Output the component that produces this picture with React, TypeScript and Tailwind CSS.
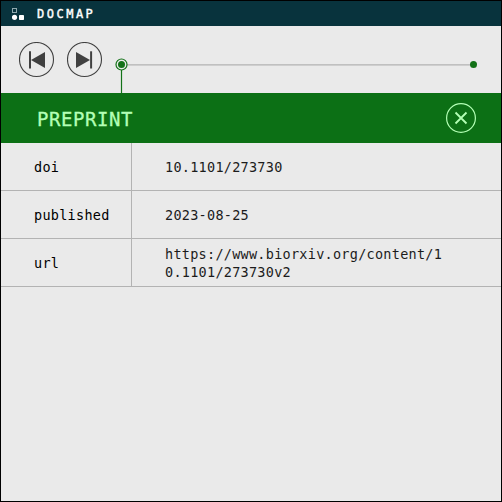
const rows = [
  { name: 'doi', value: '10.1101/273730' },
  { name: 'published', value: '2023-08-25' },
  { name: 'url', value: 'https://www.biorxiv.org/content/10.1101/273730v2' },
];

function Logo() {
  return (
    <svg className="block shrink-0" width="14" height="13" viewBox="0 0 14 13">
      <rect x="0.5" y="1.5" width="4" height="4" fill="none" stroke="#8fa8ae" />
      <circle cx="2.5" cy="10.3" r="2.6" fill="#fff" />
      <rect x="7" y="8" width="5" height="5" rx="0.8" fill="#fff" />
    </svg>
  );
}

function PreviousIcon() {
  return (
    <svg className="block" width="36" height="36" viewBox="0 0 36 36">
      <circle cx="17.5" cy="17.5" r="17" fill="none" stroke="#404040" strokeWidth="1.1" />
      <path d="M11 9.3V26.5" stroke="#404040" strokeWidth="2" />
      <path d="M12 18L26 10V26Z" fill="#404040" />
    </svg>
  );
}

function NextIcon() {
  return (
    <svg className="block" width="36" height="36" viewBox="0 0 36 36">
      <circle cx="17.5" cy="17.5" r="17" fill="none" stroke="#404040" strokeWidth="1.1" />
      <path d="M24.1 9.3V26.5" stroke="#404040" strokeWidth="2" />
      <path d="M23 18L9 10V26Z" fill="#404040" />
    </svg>
  );
}

function Timeline() {
  return (
    <svg className="ml-2.5 block" width="370" height="67" viewBox="0 0 370 67">
      <path d="M14 38.9H358" stroke="#b2b2b2" strokeWidth="1.2" />
      <path d="M8.5 38.5V67" stroke="#137218" strokeWidth="1.2" />
      <circle cx="8.5" cy="38.5" r="5.5" fill="#ebebeb" stroke="#137218" strokeWidth="1.2" />
      <circle cx="8.5" cy="38.5" r="3.5" fill="#137218" />
      <circle cx="360.5" cy="38.5" r="3.5" fill="#137218" />
    </svg>
  );
}

export default function App() {
  return (
    <div className="h-[502px] w-[502px] overflow-hidden border border-black bg-[#eaeaea] font-['DejaVu_Sans_Mono','Liberation_Mono',monospace]">
      <header className="flex h-[25px] items-center bg-[#08333d] pl-[11px] text-white">
        <Logo />
        <h1 className="ml-[11px] pt-px text-[12px] leading-none tracking-[2.5px] [-webkit-text-stroke:0.4px_currentColor]">DOCMAP</h1>
      </header>
      <nav className="flex h-[67px] pl-[18px]">
        <div className="flex gap-3 pt-4">
          <button aria-label="Previous step" className="h-9 w-9"><PreviousIcon /></button>
          <button aria-label="Next step" className="h-9 w-9"><NextIcon /></button>
        </div>
        <Timeline />
      </nav>
      <section>
        <div className="flex h-[50px] items-center justify-between bg-[#0c7015] pr-[25px] pl-9 text-[#b3ffb5]">
          <h2 className="pt-0.5 text-[19px] leading-none tracking-[0.56px] [-webkit-text-stroke:0.3px_currentColor]">PREPRINT</h2>
          <button aria-label="Close">
            <svg className="block" width="30" height="30" viewBox="0 0 30 30" fill="none" stroke="currentColor">
              <circle cx="15" cy="15" r="14.4" strokeWidth="1.2" />
              <path d="M9.5 9.5L20.5 20.5M20.5 9.5L9.5 20.5" strokeWidth="1.8" />
            </svg>
          </button>
        </div>
        <dl>
          {rows.map((row) => (
            <div key={row.name} className="flex h-12 border-b border-[#b3b3b3] text-[13.5px] leading-[18px] tracking-[0.27px]">
              <dt className="flex w-[131px] shrink-0 items-center border-r border-[#b3b3b3] pl-[33px] text-black">{row.name}</dt>
              <dd className="flex items-center pl-[33px] text-[#1c1c1c]">
                <span className="w-[280px] break-all">{row.value}</span>
              </dd>
            </div>
          ))}
        </dl>
      </section>
    </div>
  );
}
